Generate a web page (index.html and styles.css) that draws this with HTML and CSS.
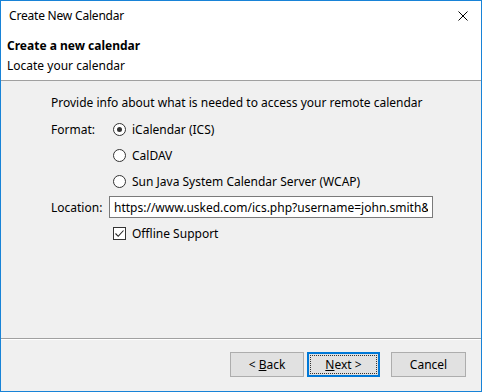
FILE: index.html
```html
<!DOCTYPE html>
<html lang="en">
<head>
  <meta charset="UTF-8" />
  <title>Create New Calendar</title>
  <link rel="stylesheet" href="styles.css">
</head>
<body>
  <div class="window">
    <div class="titlebar">
      <span class="title">Create New Calendar</span>
      <svg class="close" width="10" height="10" viewBox="0 0 10 10">
        <path d="M0.5 0.5 L9.5 9.5 M9.5 0.5 L0.5 9.5" stroke="#000" stroke-width="1" fill="none" />
      </svg>
    </div>

    <div class="header">
      <div class="header-title">Create a new calendar</div>
      <div class="header-sub">Locate your calendar</div>
    </div>

    <div class="content">
      <div class="intro">Provide info about what is needed to access your remote calendar</div>
      <div class="form">
        <div class="label">Format:</div>
        <div class="option"><span class="radio checked"></span>iCalendar (ICS)</div>

        <div></div>
        <div class="option"><span class="radio"></span>CalDAV</div>

        <div></div>
        <div class="option"><span class="radio"></span>Sun Java System Calendar Server (WCAP)</div>

        <div class="label">Location:</div>
        <input class="input" type="text" readonly value="https://www.usked.com/ics.php?username=john.smith&amp;key=abc123" />

        <div></div>
        <div class="option">
          <span class="check">
            <svg width="11" height="11" viewBox="0 0 11 11">
              <path d="M1.5 5.5 L4.2 8.3 L9.5 2.5" stroke="#222" stroke-width="1.1" fill="none" />
            </svg>
          </span>Offline Support
        </div>
      </div>
    </div>

    <div class="footer">
      <button class="btn">&lt; <u>B</u>ack</button>
      <button class="btn default"><span class="focus"><u>N</u>ext &gt;</span></button>
      <button class="btn cancel">Cancel</button>
    </div>
  </div>
</body>
</html>
```

FILE: styles.css
```css
html, body {
  margin: 0;
  padding: 0;
}
body {
  font-family: 'Noto Sans', 'Open Sans', sans-serif;
  font-size: 12px;
  color: #000;
  background: #f0f0f0;
}
.window {
  width: 482px;
  height: 392px;
  box-sizing: border-box;
  border: 1px solid #1883d7;
  background: #f0f0f0;
  display: flex;
  flex-direction: column;
}
.titlebar {
  height: 29px;
  background: #fff;
  display: flex;
  align-items: center;
  justify-content: space-between;
  padding: 0 13px 0 8px;
}
.title {
  letter-spacing: -0.2px;
}
.close {
  display: block;
}
.header {
  background: #fff;
  height: 50px;
  padding: 0 6px;
  border-bottom: 1px solid #a0a0a0;
}
.header-title {
  font-weight: bold;
  line-height: 20px;
  margin-top: 6px;
}
.header-sub {
  line-height: 20px;
}
.content {
  flex: 1;
  padding: 9px 0 0 50px;
}
.intro {
  height: 26px;
  line-height: 26px;
}
.form {
  display: grid;
  grid-template-columns: 58px 324px;
  grid-auto-rows: 26px;
  align-items: center;
}
.option {
  display: flex;
  align-items: center;
  padding-left: 4px;
}
.radio {
  width: 13px;
  height: 13px;
  box-sizing: border-box;
  border: 1px solid #333;
  border-radius: 50%;
  background: #fff;
  margin-right: 6px;
  display: flex;
  align-items: center;
  justify-content: center;
}
.radio.checked::after {
  content: "";
  width: 5px;
  height: 5px;
  border-radius: 50%;
  background: #333;
}
.check {
  width: 13px;
  height: 13px;
  box-sizing: border-box;
  border: 1px solid #333;
  background: #fff;
  margin-right: 6px;
  display: flex;
  align-items: center;
  justify-content: center;
}
.check svg {
  display: block;
}
.input {
  width: 324px;
  height: 22px;
  box-sizing: border-box;
  border: 1px solid #7a7a7a;
  background: #fff;
  padding: 0 4px;
  margin: 0;
  font-family: inherit;
  font-size: 12px;
  color: #000;
  outline: none;
}
.footer {
  height: 53px;
  box-sizing: border-box;
  flex-shrink: 0;
  border-top: 1px solid #a0a0a0;
  box-shadow: inset 0 1px 0 #fff;
  display: flex;
  justify-content: flex-end;
  align-items: flex-start;
  padding: 13px 15px 0 0;
}
.btn {
  width: 74px;
  height: 25px;
  box-sizing: border-box;
  border: 1px solid #adadad;
  background: #e1e1e1;
  font-family: inherit;
  font-size: 12px;
  color: #000;
  padding: 0;
  margin-left: 3px;
}
.btn.default {
  width: 73px;
  border: 2px solid #0078d7;
  padding: 1px;
}
.focus {
  display: flex;
  align-items: center;
  justify-content: center;
  height: 100%;
  border: 1px dotted #333;
  box-sizing: border-box;
}
.btn.cancel {
  width: 75px;
  margin-left: 11px;
}
```
